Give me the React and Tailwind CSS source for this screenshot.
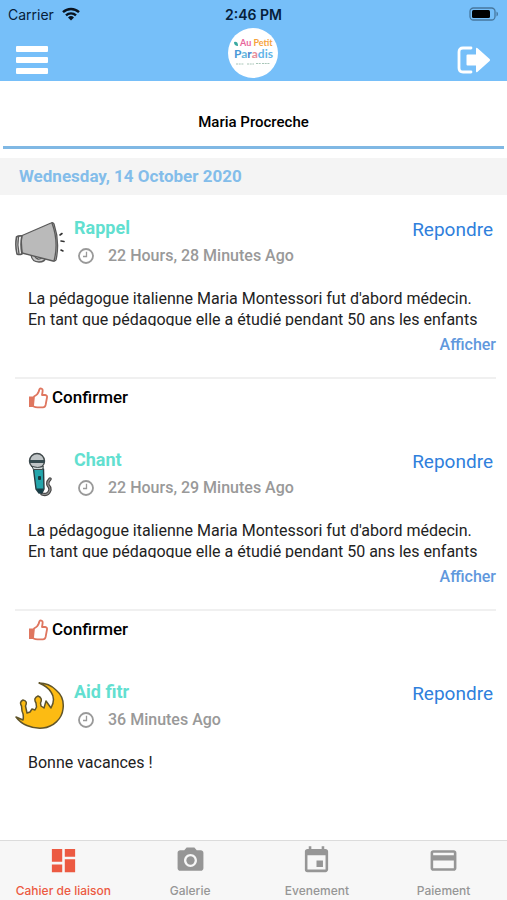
import { MdCreditCard, MdDashboard, MdEvent, MdPhotoCamera } from 'react-icons/md';

const MESSAGE = "La pédagogue italienne Maria Montessori fut d'abord médecin. En tant que pédagogue elle a étudié pendant 50 ans les enfants";

const posts = [
  { id: 1, title: 'Rappel', time: '22 Hours, 28 Minutes Ago', text: MESSAGE, Icon: MegaphoneIcon, confirm: true },
  { id: 2, title: 'Chant', time: '22 Hours, 29 Minutes Ago', text: MESSAGE, Icon: MicrophoneIcon, confirm: true },
  { id: 3, title: 'Aid fitr', time: '36 Minutes Ago', text: 'Bonne vacances !', Icon: MoonIcon, confirm: false },
];

const tabs = [
  { label: 'Cahier de liaison', Icon: MdDashboard, active: true },
  { label: 'Galerie', Icon: MdPhotoCamera },
  { label: 'Evenement', Icon: MdEvent },
  { label: 'Paiement', Icon: MdCreditCard },
];

export default function App() {
  return (
    <div className="flex min-h-screen flex-col bg-white font-['Roboto',sans-serif] text-black">
      <Header />
      <main className="flex-1">
        <div className="mx-[3px] border-b-3 border-[#80b8e4] pt-[29px] pb-3 text-center">
          <h1 className="text-[15px] leading-6 font-medium">Maria Procreche</h1>
        </div>
        <h2 className="mt-[9px] bg-[#f4f4f4] px-[19px] py-[6px] text-[17px] leading-[25px] font-bold text-[#83bdea]">
          Wednesday, 14 October 2020
        </h2>
        {posts.map((post) => (
          <Post key={post.id} {...post} />
        ))}
      </main>
      <TabBar />
    </div>
  );
}

function Header() {
  return (
    <header className="bg-[#76bff9] font-['Inter',sans-serif] text-[#06203a]">
      <div className="grid h-7 grid-cols-3 items-center px-2">
        <div className="flex items-center gap-2 text-[14px]">
          Carrier
          <WifiIcon />
        </div>
        <span className="text-center text-[14px] font-semibold">2:46 PM</span>
        <BatteryIcon />
      </div>
      <div className="grid h-[53px] grid-cols-3 items-center px-4">
        <button type="button" aria-label="Menu" className="flex w-8 flex-col gap-[5px] pt-[10px]">
          <span className="h-[6px] w-full rounded-[1px] bg-white" />
          <span className="h-[6px] w-full rounded-[1px] bg-white" />
          <span className="h-[6px] w-full rounded-[1px] bg-white" />
        </button>
        <div className="mb-1 flex size-[50px] items-center justify-center justify-self-center rounded-full bg-white">
          <Logo />
        </div>
        <button type="button" aria-label="Logout" className="justify-self-end pt-[10px] text-white">
          <LogoutIcon />
        </button>
      </div>
    </header>
  );
}

function Post({ title, time, text, Icon, confirm }) {
  return (
    <article className="px-[11px] pt-5 pb-[17px]">
      <div className="flex pl-1">
        <div className="flex w-[59px] pt-[1px]">
          <Icon />
        </div>
        <div className="flex-1">
          <h3 className="text-[18px] leading-[26px] font-bold text-[#62dfd0]">{title}</h3>
          <div className="flex items-center gap-[14px] pt-[3px] pl-1 text-[#999]">
            <ClockIcon />
            <span className="text-[16px] leading-6 font-medium">{time}</span>
          </div>
        </div>
        <button type="button" className="mt-[2px] mr-[3px] self-start text-[19px] leading-[26px] text-[#2f80dc]">
          Repondre
        </button>
      </div>
      <p className={`mt-5 ml-[17px] mr-1 text-[16px] leading-[21px] text-[#222] ${confirm ? 'h-[38px] overflow-hidden' : ''}`}>
        {text}
      </p>
      {confirm && (
        <>
          <div className="ml-1 flex h-[53px] justify-end border-b-2 border-[#f0f0f0] pt-[7px]">
            <button type="button" className="self-start text-[16px] leading-6 font-medium text-[#6098dd]">
              Afficher
            </button>
          </div>
          <button type="button" className="mt-[6px] ml-[17px] flex items-center gap-1 text-[17px] leading-[25px] font-medium">
            <ThumbIcon />
            Confirmer
          </button>
        </>
      )}
    </article>
  );
}

function TabBar() {
  return (
    <nav className="grid h-[60px] grid-cols-4 border-t border-[#dcdcdc] bg-[#f7f7f7] font-['Inter',sans-serif]">
      {tabs.map(({ label, Icon, active }) => (
        <a
          key={label}
          href="#"
          className={`flex flex-col items-center pt-1 text-[12px] leading-4 font-medium whitespace-nowrap ${active ? 'text-[#ec5a42]' : 'text-[#969696]'}`}
        >
          <Icon className="mb-[7px] size-[31px]" />
          {label}
        </a>
      ))}
    </nav>
  );
}

function WifiIcon() {
  return (
    <svg width="18" height="14" viewBox="0 0 18 14" fill="none" stroke="#0a1420" strokeWidth="2.4">
      <path d="M1 5.2a11.5 11.5 0 0 1 16 0" />
      <path d="M4 8.4a7.2 7.2 0 0 1 10 0" />
      <path d="M9 13.4l-3-3a4.3 4.3 0 0 1 6 0z" fill="#0a1420" stroke="none" />
    </svg>
  );
}

function BatteryIcon() {
  return (
    <svg className="justify-self-end" width="30" height="14" viewBox="0 0 30 14">
      <rect x="1" y="1" width="25" height="12" rx="3.5" fill="none" stroke="#47779d" strokeWidth="1.3" />
      <rect x="3" y="3" width="18" height="8" rx="1.5" fill="#000" />
      <path d="M27.5 4.5v5q1.5-.8 1.5-2.5t-1.5-2.5z" fill="#47779d" />
    </svg>
  );
}

function LogoutIcon() {
  return (
    <svg width="34" height="28" viewBox="0 0 34 28" fill="none">
      <path d="M14 2H6Q2 2 2 6v16q0 4 4 4h8" stroke="currentColor" strokeWidth="2.8" strokeLinecap="round" />
      <path d="M9.5 9.5q0-1 1-1H19V3q0-2 1.600-.7l12 10.600q1 1.100 0 2.200l-12 10.600Q19 27 19 25v-5.500h-8.500q-1 0-1-1z" fill="currentColor" />
    </svg>
  );
}

function Logo() {
  return (
    <svg width="42" height="38" viewBox="0 0 42 38" className="font-['Lato',sans-serif] font-bold">
      <path d="M2 8q4-1 4 4q-4 0-4-4z" fill="#39a9a0" />
      <text x="8" y="12" fontSize="9" fill="#e8659b">
        Au <tspan fill="#f6a23c">Petit</tspan>
      </text>
      <text x="2" y="24" fontSize="12" fill="#4a9ad8">
        P<tspan fill="#66b7dd">a</tspan><tspan fill="#4a86cf">r</tspan><tspan fill="#e88c9a">a</tspan><tspan fill="#61b4e8">dis</tspan>
      </text>
      <path d="M4 30h8m3 0h7m2-.5h5m1 0h8" stroke="#a9c6b8" strokeWidth="1.2" strokeDasharray="2 .7" />
    </svg>
  );
}

function ClockIcon() {
  return (
    <svg width="16" height="16" viewBox="0 0 16 16" fill="none" stroke="currentColor">
      <circle cx="8" cy="8" r="7" strokeWidth="1.8" />
      <path d="M8.5 3.8v4.700H5" strokeWidth="1.3" />
    </svg>
  );
}

function ThumbIcon() {
  return (
    <svg width="20" height="22" viewBox="0 0 20 22" fill="none" stroke="#df765f" strokeWidth="1.8" strokeLinejoin="round">
      <path d="M1 9.5h4.500v10.500H1z" fill="#df765f" stroke="none" />
      <path d="M6 9.5q4-2 5-5.500.2-2.700 1.700-2.700 2.300.2 1.900 3.200L14 8h3.200q2.200.3 1.800 2.500L17.600 18q-.5 2.300-2.600 2.300H9.500Q7.500 20.300 5 19.200z" />
    </svg>
  );
}

function MegaphoneIcon() {
  return (
    <svg width="50" height="50" viewBox="0 0 50 50" stroke="#5a5a5a" strokeWidth="1.3" strokeLinecap="round" strokeLinejoin="round">
      <path d="M16 39q1 7 8 7 6 0 7-5l-3-.5q-2 3-5 2.500-3-.5-3.500-4z" fill="#c8c8c8" />
      <path d="M6 20L36 7q2-1 3 1 6 18 2 36-1 1.500-3 1L7 37z" fill="#bababa" />
      <path d="M37 7q7 19 2 38" fill="none" />
      <path d="M1.500 21q2-1.500 5.500-1-2 8 0 18-3 1-5 0-2-8-.5-17z" fill="#f1f1f1" strokeWidth="1.6" />
      <path d="M3.500 21q-1.500 8 .5 16.500" fill="none" />
      <path d="M45 19l2-1.500M46 25l3 .5M46 34l2 1" stroke="#333" strokeWidth="1.6" />
    </svg>
  );
}

function MicrophoneIcon() {
  return (
    <svg width="50" height="50" viewBox="0 0 50 50" strokeLinecap="round" strokeLinejoin="round">
      <path d="M27 46q6 2 8-4 0-3-2-5-1-3 2-6" fill="none" stroke="#444" strokeWidth="3.4" />
      <path d="M27 46q6 2 8-4 0-3-2-5-1-3 2-6" fill="none" stroke="#909090" strokeWidth="1.2" />
      <path d="M18.500 21h10l.5 20-2 4h-3l-3-4z" fill="#24a5ab" stroke="#263d43" strokeWidth="1.4" />
      <path d="M21.500 40.500h7L27 45h-3z" fill="#173d46" />
      <rect x="23" y="28" width="3" height="4" rx="1" fill="#18373d" />
      <circle cx="22" cy="13" r="7.500" fill="#c0c5c7" stroke="#41494b" strokeWidth="1.4" />
      <path d="M14.500 12h15v3h-15z" fill="#354b50" />
      <path d="M17 18.500l1.500 3h9l1-3q-6 2-11.500 0z" fill="#d1dada" stroke="#41494b" />
    </svg>
  );
}

function MoonIcon() {
  return (
    <svg width="50" height="50" viewBox="0 0 50 50" fill="#fcbb13" stroke="#61552a" strokeWidth="1.5" strokeLinejoin="round">
      <path d="M24 3C31 3 37 6 41 10C47 15 49 22 48 29C47 39 38 47 28 48C16 49 6 44 1 37L8 40Q9 35 7 31L6.500 26Q4 22 8 20Q13 21 10.500 26L12 33L15 32L17 29L20 30L21.500 27L21 23Q18 18 23 16Q28 18 25.500 23L26 26L29 28L31 21L36 28Q41 19 36 12Q32 6 24 3Z" />
    </svg>
  );
}
